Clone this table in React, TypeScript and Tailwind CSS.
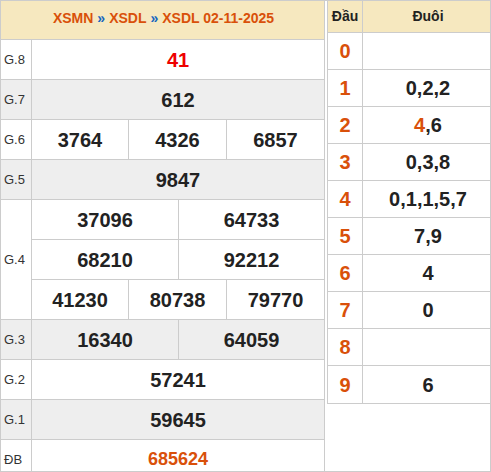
import React from "react";

const font = { fontFamily: '"Liberation Sans", Arial, sans-serif' };

function Label({ text, gray, extra }: { text: string; gray?: boolean; extra?: string }) {
  return (
    <div
      className={`w-[31px] shrink-0 border-r border-[#cccccc] flex items-center pl-[3px] text-[13px] text-[#333333] ${
        gray ? "bg-[#eeeeee]" : ""
      } ${extra ?? ""}`}
    >
      {text}
    </div>
  );
}

function Row({
  label,
  values,
  gray,
  last,
  valueClass,
}: {
  label: string;
  values: string[];
  gray?: boolean;
  last?: boolean;
  valueClass?: string;
}) {
  return (
    <div
      className={`flex ${last ? "h-[31px]" : "h-[40px] border-b border-[#cccccc]"} ${
        gray ? "bg-[#eeeeee]" : ""
      }`}
    >
      <Label text={label} gray={gray} extra={last ? "pt-[9px]" : ""} />
      <div className="flex flex-1">
        {values.map((v, i) => (
          <div
            key={i}
            className={`flex-1 flex items-center justify-center font-bold ${
              valueClass ?? "text-[20px] text-[#222222]"
            } ${last ? "pt-[8px]" : ""} ${i < values.length - 1 ? "border-r border-[#cccccc]" : ""}`}
          >
            {v}
          </div>
        ))}
      </div>
    </div>
  );
}

const loto: { d: string; t: React.ReactNode }[] = [
  { d: "0", t: "" },
  { d: "1", t: "0,2,2" },
  { d: "2", t: (<><span className="text-[#d9500a]">4</span>,6</>) },
  { d: "3", t: "0,3,8" },
  { d: "4", t: "0,1,1,5,7" },
  { d: "5", t: "7,9" },
  { d: "6", t: "4" },
  { d: "7", t: "0" },
  { d: "8", t: "" },
  { d: "9", t: "6" },
];

const cell = "flex items-center justify-center font-bold text-[20px] text-[#222222]";

export default function App() {
  return (
    <div
      style={font}
      className="w-[491px] h-[472px] border border-[#cccccc] flex bg-white overflow-hidden"
    >
      {/* Left table */}
      <div className="w-[324px] shrink-0 border-r border-[#cccccc] flex flex-col">
        <div className="h-[39px] border-b border-[#cccccc] bg-[#f6e8bf] flex items-center justify-center pb-[4px] pl-[2px] text-[14px] font-bold text-[#d9500a]">
          XSMN <span className="text-[#1565c0] mx-[4px]">»</span> XSDL{" "}
          <span className="text-[#1565c0] mx-[4px]">»</span> XSDL 02-11-2025
        </div>
        <Row label="G.8" values={["41"]} valueClass="text-[20px] text-[#ee0000]" />
        <Row label="G.7" values={["612"]} gray />
        <div className="flex border-b border-[#cccccc] h-[40px]">
          <Label text="G.6" />
          <div className="flex flex-1">
            <div className={`w-[97px] border-r border-[#cccccc] ${cell}`}>3764</div>
            <div className={`w-[98px] border-r border-[#cccccc] ${cell}`}>4326</div>
            <div className={`flex-1 ${cell}`}>6857</div>
          </div>
        </div>
        <Row label="G.5" values={["9847"]} gray />
        <div className="flex border-b border-[#cccccc] h-[120px]">
          <Label text="G.4" />
          <div className="flex flex-col flex-1">
            <div className="flex h-[40px] border-b border-[#cccccc]">
              <div className={`w-[147px] border-r border-[#cccccc] ${cell}`}>37096</div>
              <div className={`flex-1 ${cell}`}>64733</div>
            </div>
            <div className="flex h-[40px] border-b border-[#cccccc]">
              <div className={`w-[147px] border-r border-[#cccccc] ${cell}`}>68210</div>
              <div className={`flex-1 ${cell}`}>92212</div>
            </div>
            <div className="flex h-[39px]">
              <div className={`w-[97px] border-r border-[#cccccc] ${cell}`}>41230</div>
              <div className={`w-[98px] border-r border-[#cccccc] ${cell}`}>80738</div>
              <div className={`flex-1 ${cell}`}>79770</div>
            </div>
          </div>
        </div>
        <div className="flex border-b border-[#cccccc] h-[40px] bg-[#eeeeee]">
          <Label text="G.3" gray />
          <div className="flex flex-1">
            <div className={`w-[147px] border-r border-[#cccccc] ${cell}`}>16340</div>
            <div className={`flex-1 ${cell}`}>64059</div>
          </div>
        </div>
        <Row label="G.2" values={["57241"]} />
        <Row label="G.1" values={["59645"]} gray />
        <Row label="ĐB" values={["685624"]} last valueClass="text-[18px] text-[#d9500a]" />
      </div>
      {/* Right table */}
      <div className="flex-1 pl-[2px]">
        <div className="border-l border-b border-[#cccccc] flex flex-col">
          <div className="flex h-[32px] border-b border-[#cccccc] bg-[#f6e8bf] text-[14px] font-bold text-[#222222]">
            <div className="w-[35px] border-r border-[#cccccc] flex items-center justify-center">Đầu</div>
            <div className="flex-1 flex items-center justify-center pl-[3px]">Đuôi</div>
          </div>
          {loto.map((r, i) => (
            <div
              key={r.d}
              className={`flex h-[37px] ${i < loto.length - 1 ? "border-b border-[#cccccc]" : ""}`}
            >
              <div className="w-[35px] border-r border-[#cccccc] flex items-center justify-center font-bold text-[20px] text-[#d9500a]">
                {r.d}
              </div>
              <div className="flex-1 flex items-center justify-center pl-[3px] font-bold text-[20px] text-[#222222]">
                {r.t}
              </div>
            </div>
          ))}
        </div>
      </div>
    </div>
  );
}
